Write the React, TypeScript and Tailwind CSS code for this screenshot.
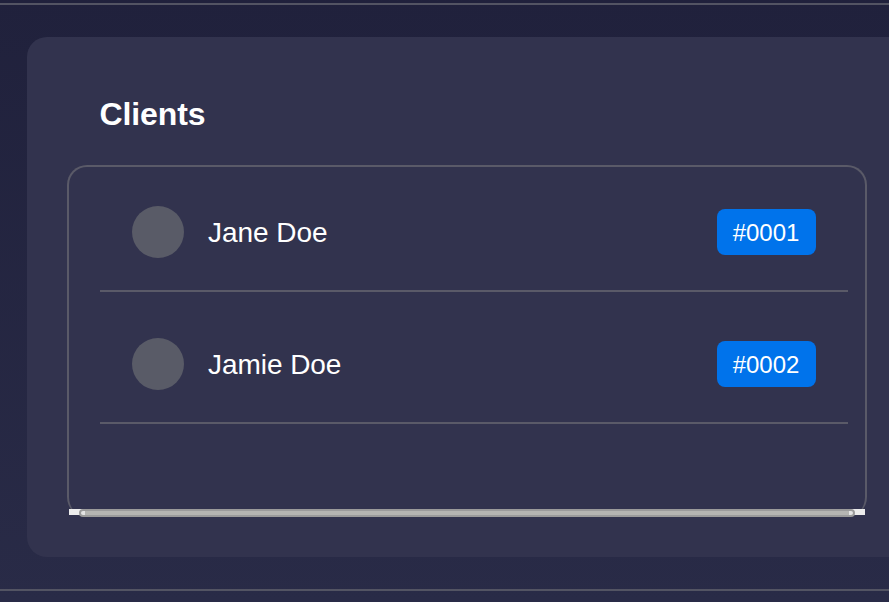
const clients = [
  { name: 'Jane Doe', id: '#0001' },
  { name: 'Jamie Doe', id: '#0002' },
];

function Scrollbar() {
  return (
    <div className="mt-auto -mr-[17px] -ml-[31px] h-[6px] shrink-0 bg-[#ececec] px-[10px]">
      <div className="h-2 rounded-[4px] border-2 border-[#9b9b9b] bg-[#e4e4e4] px-1">
        <div className="h-full bg-[#b5b5b2]" />
      </div>
    </div>
  );
}

export default function App() {
  return (
    <div className="flex h-[602px] w-[889px] flex-col overflow-hidden bg-linear-to-b from-[#20213c] to-[#292b47] pt-[3px] font-['Liberation_Sans',Arial,sans-serif] text-white">
      <main className="h-[588px] w-full shrink-0 border-y-2 border-[#535463] pt-8 pl-[27px]">
        <section className="h-[520px] w-[900px] rounded-[20px] bg-[#32334e] px-10 pt-[57px]">
          <h1 className="pl-[32.5px] text-[32px] leading-[40px] font-bold tracking-[-0.1px]">Clients</h1>
          <div className="mt-[31px] flex h-[352px] w-[800px] flex-col rounded-[20px] border-2 border-b-0 border-[#5a5a68] pr-[17px] pb-[2px] pl-[31px]">
            {clients.map((client) => (
              <div key={client.id} className="flex h-[132px] shrink-0 items-center border-b-2 border-[#5a5a68] px-8 pt-[14px] first:h-[125px] first:pt-[7px]">
                <div className="size-[52px] rounded-full bg-[#595b67]" />
                <span className="ml-6 pt-px text-[28px] tracking-[-0.05px]">{client.name}</span>
                <span className="ml-auto flex h-[46px] w-[99px] items-center justify-center rounded-lg bg-[#0073eb] pt-px pr-px text-[24px]">{client.id}</span>
              </div>
            ))}
            <Scrollbar />
          </div>
        </section>
      </main>
    </div>
  );
}
